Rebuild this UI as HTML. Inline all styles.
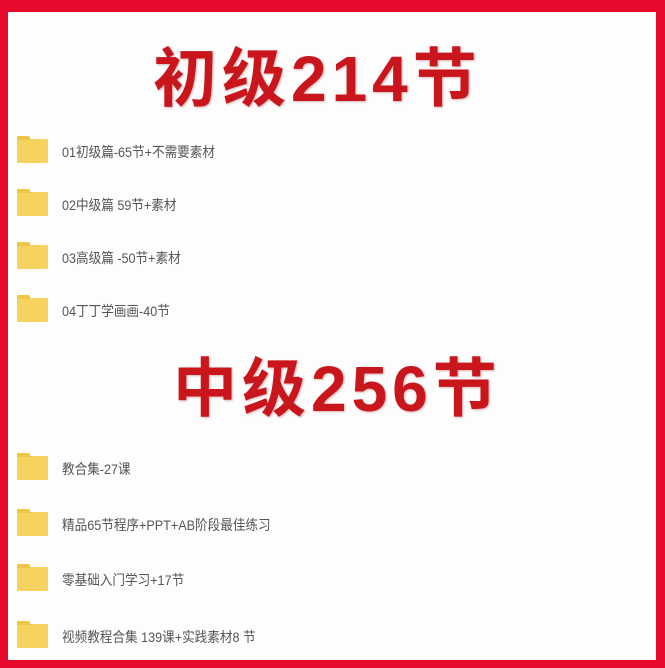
<!DOCTYPE html>
<html><head><meta charset="utf-8"><style>
html,body{margin:0;padding:0}
body{width:665px;height:668px;background:#e80a2c;position:relative;overflow:hidden;font-family:"Liberation Sans","Noto Sans CJK SC",sans-serif}
.w{position:absolute;left:8px;top:12px;width:648px;height:648px;background:#fdfdfd}
.t{position:absolute;font-weight:bold;color:#c8161c;font-size:64px;line-height:64px;letter-spacing:5px;white-space:nowrap;text-shadow:1px 1px 2px rgba(120,0,0,.3)}
.i{position:absolute;left:17px;height:26px}
.f{position:absolute;left:0;top:0;width:31px;height:24px;background:#f6d35e;border-radius:1px}
.f:before{content:"";position:absolute;left:0;top:-3px;width:13px;height:4px;background:#f0c64a;border-radius:1px 2px 0 0}
.l{position:absolute;left:45px;top:3px;font-size:14px;color:#555;white-space:nowrap;transform:scaleX(.9);transform-origin:left}
</style></head><body>
<div class="w"></div>
<div class="t" style="left:153px;top:47px">初级214节</div>
<div class="t" style="left:173px;top:357px">中级256节</div>
<div class="i" style="top:139px"><div class="f"></div><div class="l">01初级篇-65节+不需要素材</div></div>
<div class="i" style="top:192px"><div class="f"></div><div class="l">02中级篇 59节+素材</div></div>
<div class="i" style="top:245px"><div class="f"></div><div class="l">03高级篇 -50节+素材</div></div>
<div class="i" style="top:298px"><div class="f"></div><div class="l">04丁丁学画画-40节</div></div>
<div class="i" style="top:456px"><div class="f"></div><div class="l">教合集-27课</div></div>
<div class="i" style="top:512px"><div class="f"></div><div class="l">精品65节程序+PPT+AB阶段最佳练习</div></div>
<div class="i" style="top:567px"><div class="f"></div><div class="l">零基础入门学习+17节</div></div>
<div class="i" style="top:624px"><div class="f"></div><div class="l">视频教程合集 139课+实践素材8 节</div></div>
</body></html>
